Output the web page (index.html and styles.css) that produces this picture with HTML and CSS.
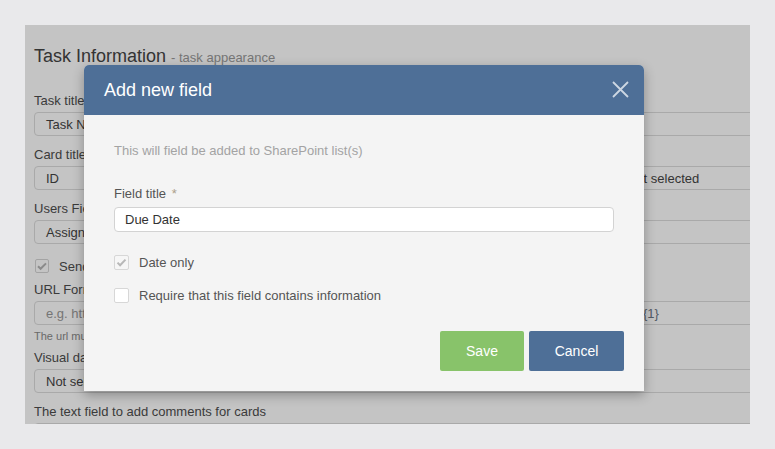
FILE: index.html
```html
<!DOCTYPE html>
<html lang="en">
    <head>
        <meta charset="UTF-8" />
        <meta name="viewport" content="width=device-width, initial-scale=1.0" />
        <title>Add new field</title>
        <link rel="stylesheet" href="styles.css">
    </head>
    <body>
        <div class="panel">
            <h2 class="section-title">Task Information <small>- task appearance</small></h2>

            <div class="label">Task title</div>
            <div class="field">Task Name</div>

            <div class="label">Card title</div>
            <div class="field split">
                <span>ID</span>
                <span>Not selected</span>
            </div>

            <div class="label">Users Field</div>
            <div class="field">AssignedTo</div>

            <label class="check-row">
                <span class="box checked">
                    <svg viewBox="0 0 14 14" width="14" height="14"><path d="M3 7.2l2.6 2.6L11 4.4" fill="none" stroke="#b5b5b5" stroke-width="2"/></svg>
                </span>
                Send
            </label>

            <div class="label">URL Format</div>
            <div class="field split placeholder">
                <span>e.g. https://contoso.sharepoint.com/sites/pwa/Lists/Tasks/DispForm.aspx?ID=</span>
                <span class="token">{1}</span>
            </div>
            <div class="help">The url must contain {1} placeholder</div>

            <div class="label">Visual data</div>
            <div class="field">Not selected</div>

            <div class="label">The text field to add comments for cards</div>
            <div class="field"></div>

            <div class="modal">
                <div class="modal-header">
                    <h3>Add new field</h3>
                    <svg class="close" viewBox="0 0 17 17" width="17" height="17">
                        <path d="M1 1l15 15M16 1L1 16" stroke="#cdd7e3" stroke-width="1.8" fill="none"/>
                    </svg>
                </div>
                <div class="modal-body">
                    <p class="desc">This will field be added to SharePoint list(s)</p>
                    <div class="modal-label">Field title <span class="req">*</span></div>
                    <div class="text-input">Due Date</div>
                    <label class="option first">
                        <span class="tick checked">
                            <svg viewBox="0 0 15 15" width="15" height="15"><path d="M3.5 7.6l2.6 2.6 5.4-5.6" fill="none" stroke="#b8b8b8" stroke-width="2"/></svg>
                        </span>
                        Date only
                    </label>
                    <label class="option">
                        <span class="tick"></span>
                        Require that this field contains information
                    </label>
                </div>
                <div class="modal-footer">
                    <button class="btn save">Save</button>
                    <button class="btn cancel">Cancel</button>
                </div>
            </div>
        </div>
    </body>
</html>
```

FILE: styles.css
```css
body {
    margin: 0;
    padding: 25px 25px 0;
    height: 449px;
    box-sizing: border-box;
    overflow: hidden;
    background: #e9e9eb;
    font-family: "Liberation Sans", Arial, sans-serif;
    color: #4d4d4d;
}
.panel {
    position: relative;
    width: 725px;
    height: 399px;
    box-sizing: border-box;
    padding: 21px 0 0 9px;
    background: #fff;
    overflow: hidden;
}
.panel::after {
    content: "";
    position: absolute;
    top: 0;
    left: 0;
    right: 0;
    bottom: 0;
    background: rgba(0, 0, 0, 0.23);
}
.section-title {
    margin: 0 0 24px;
    font-size: 18px;
    font-weight: normal;
    line-height: 21px;
    color: #444;
}
.section-title small {
    font-size: 13px;
    color: #999;
}
.label {
    font-size: 13px;
    line-height: 18px;
    margin-bottom: 2px;
}
.field {
    width: 760px;
    height: 24px;
    box-sizing: border-box;
    border: 1px solid #dcdcdc;
    border-radius: 4px;
    padding: 0 11px;
    margin-bottom: 10px;
    display: flex;
    align-items: center;
    font-size: 13px;
    color: #444;
    white-space: nowrap;
    overflow: hidden;
}
.field.split {
    display: grid;
    grid-template-columns: 581px auto;
    align-items: center;
}
.field.split span:first-child {
    overflow: hidden;
}
.field.placeholder {
    color: #999;
    grid-template-columns: 597px auto;
    margin-bottom: 4px;
}
.field .token {
    color: #6d7784;
}
.help {
    font-size: 11px;
    line-height: 14px;
    color: #8a8a8a;
    margin-bottom: 6px;
}
.check-row {
    display: flex;
    align-items: center;
    height: 18px;
    margin: 13px 0 6px 1px;
    font-size: 13px;
}
.box {
    width: 14px;
    height: 14px;
    box-sizing: border-box;
    border: 1px solid #d5d5d5;
    border-radius: 2px;
    background: #fff;
    margin-right: 10px;
    display: flex;
    align-items: center;
    justify-content: center;
}
.box svg {
    flex: none;
}

.modal {
    position: absolute;
    top: 40px;
    left: 59px;
    width: 560px;
    z-index: 2;
    background: #f4f4f4;
    border-radius: 5px 5px 0 0;
    box-shadow: 0 4px 12px rgba(0, 0, 0, 0.3);
}
.modal-header {
    height: 50px;
    display: flex;
    align-items: center;
    justify-content: space-between;
    padding: 0 15px 0 20px;
    background: #4e6f97;
    border-radius: 5px 5px 0 0;
}
.modal-header h3 {
    margin: 0;
    font-size: 18px;
    font-weight: normal;
    color: #fff;
}
.close {
    margin-top: -2px;
}
.modal-body {
    padding: 27px 30px 0;
    font-size: 13px;
}
.desc {
    margin: 0 0 25px;
    line-height: 18px;
    color: #a3a3a3;
}
.modal-label {
    line-height: 18px;
    color: #555;
}
.req {
    color: #ad9f8a;
    margin-left: 2px;
}
.text-input {
    margin-top: 4px;
    height: 25px;
    box-sizing: border-box;
    border: 1px solid #d3d3d3;
    border-radius: 4px;
    background: #fff;
    padding: 0 10px;
    display: flex;
    align-items: center;
    color: #333;
}
.option {
    display: flex;
    align-items: center;
    height: 15px;
    margin-top: 18px;
    color: #555;
}
.option.first {
    margin-top: 23px;
}
.tick {
    width: 15px;
    height: 15px;
    box-sizing: border-box;
    border: 1px solid #d7d7d7;
    border-radius: 2px;
    background: #fff;
    margin-right: 10px;
    display: flex;
    align-items: center;
    justify-content: center;
}
.tick.checked {
    background: #f6f6f6;
}
.tick svg {
    flex: none;
}
.modal-footer {
    display: flex;
    justify-content: flex-end;
    gap: 5px;
    padding: 28px 20px 20px;
}
.btn {
    height: 40px;
    border: none;
    border-radius: 2px;
    font-family: inherit;
    font-size: 14px;
    color: #fff;
    cursor: pointer;
}
.btn.save {
    width: 84px;
    background: #88c36a;
}
.btn.cancel {
    width: 95px;
    background: #4e6f97;
}
```
